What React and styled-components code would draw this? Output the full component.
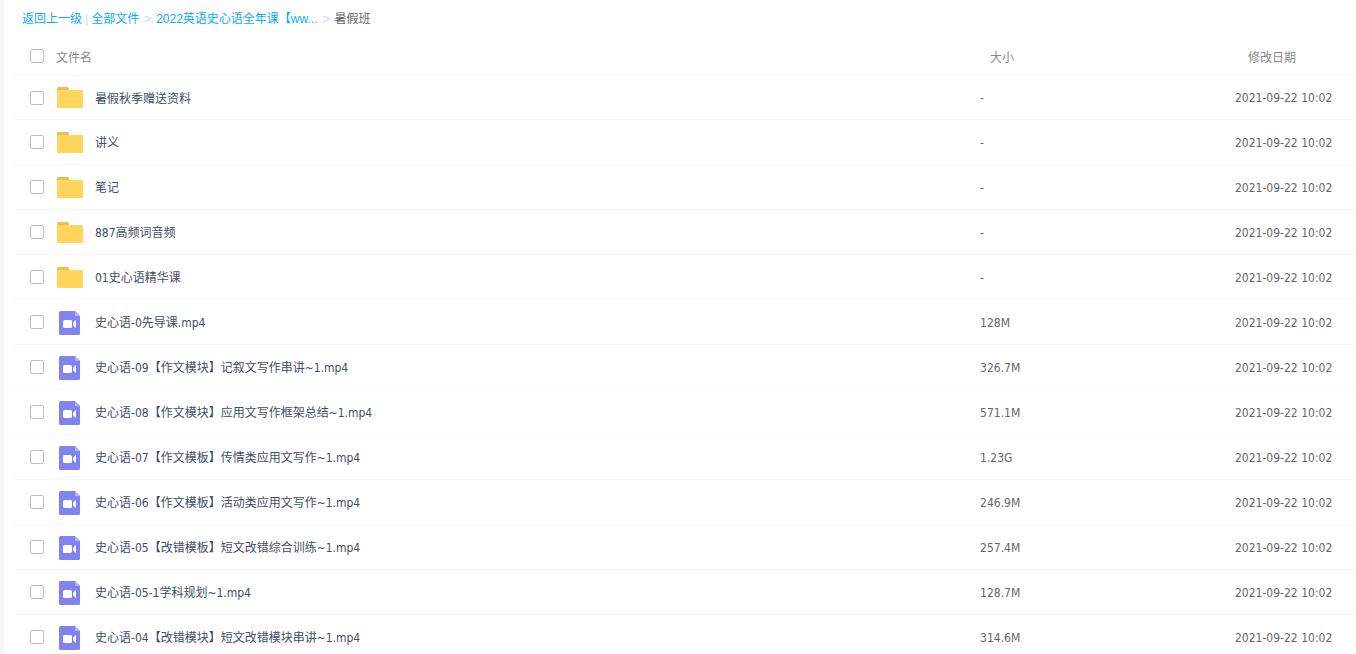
import React, { useState } from 'react';
import styled, { createGlobalStyle } from 'styled-components';

const GlobalStyle = createGlobalStyle`
  * {
    box-sizing: border-box;
  }

  body {
    margin: 0;
    background: #fff;
    color: #424e67;
    font-family: 'DejaVu Sans Condensed', 'Noto Sans', 'Noto Sans CJK SC', sans-serif;
    font-size: 12px;
  }
`;

const Page = styled.div`
  height: 100vh;
  overflow: hidden;
  border-left: 4px solid #f7f7f7;
`;

const Breadcrumb = styled.nav`
  display: flex;
  align-items: center;
  height: 37px;
  padding-left: 18px;
  font-family: 'Liberation Sans', 'Noto Sans CJK SC', sans-serif;
  line-height: 18px;
  white-space: nowrap;
`;

const Crumb = styled.a`
  color: #09aaff;
  text-decoration: none;

  &:hover {
    text-decoration: underline;
  }
`;

const CurrentCrumb = styled.span`
  color: #666;
`;

const Divider = styled.span`
  margin: 0 3px;
  color: #c4d8f4;
`;

const Arrow = styled.span`
  margin: 0 5px;
  color: #c4d8f4;
`;

const FileTable = styled.table`
  width: calc(100% - 10px);
  margin-left: 10px;
  table-layout: fixed;
  border-collapse: separate;
  border-spacing: 0;
`;

const NameCol = styled.col`
  width: auto;
`;

const SizeCol = styled.col`
  width: 19%;
`;

const DateCol = styled.col`
  width: 121px;
`;

const HeadCell = styled.th`
  height: 38px;
  padding: 0 0 0 ${(p) => p.$indent || 0}px;
  color: #888;
  font-weight: 400;
  text-align: left;
`;

const Cell = styled.td`
  height: 45px;
  padding: 0;
  border-bottom: 1px solid #f2f6fd;
  white-space: nowrap;

  tr:first-child > & {
    border-top: 1px solid #f2f6fd;
  }
`;

const InfoCell = styled(Cell)`
  padding-top: 1px;
  color: #666;
`;

const NameBox = styled.div`
  display: flex;
  align-items: center;
  padding-left: 16px;
`;

const Checkbox = styled.input`
  appearance: none;
  flex: none;
  width: 14px;
  height: 14px;
  margin: 0;
  border: 1px solid #b3c1d0;
  border-radius: 2px;
  background: #fff;
  cursor: pointer;

  &:checked {
    border-color: #09aaff;
    background: #09aaff;
  }
`;

const HeadLabel = styled.label`
  margin-left: 12px;
`;

const IconBox = styled.span`
  display: flex;
  justify-content: center;
  flex: none;
  width: 26px;
  margin: 0 12px 0 13px;
`;

const FileLink = styled.a`
  overflow: hidden;
  padding-top: 2px;
  color: #424e67;
  line-height: 20px;
  text-decoration: none;
  text-overflow: ellipsis;

  &:hover {
    color: #09aaff;
  }
`;

const FolderIcon = () => (
  <svg width="26" height="21" viewBox="0 0 26 21" aria-hidden="true">
    <path d="M0 5V1.5Q0 0 1.5 0H10.5Q12 0 12 1.5V5Z" fill="#eebf4c" />
    <path d="M0 3H24.5Q26 3 26 4.5V19.5Q26 21 24.5 21H1.5Q0 21 0 19.5Z" fill="#ffd55c" />
  </svg>
);

const VideoIcon = () => (
  <svg width="22" height="26" viewBox="0 -2 22 26" aria-hidden="true">
    <path d="M1.5 0H16L21 5V22.5Q21 24 19.5 24H1.5Q0 24 0 22.5V1.5Q0 0 1.5 0Z" fill="#8183f1" />
    <path d="M16 0L21 5H17Q16 5 16 4Z" fill="#b4b5f8" />
    <rect x="4" y="9" width="9" height="8" rx="1.5" fill="#fff" />
    <path d="M14 12L16 9.5Q17 9 17 10V16Q17 17 16 16.5L14 14Z" fill="#fff" />
  </svg>
);

const DATE = '2021-09-22 10:02';

const files = [
  { name: '暑假秋季赠送资料', folder: true },
  { name: '讲义', folder: true },
  { name: '笔记', folder: true },
  { name: '887高频词音频', folder: true },
  { name: '01史心语精华课', folder: true },
  { name: '史心语-0先导课.mp4', size: '128M' },
  { name: '史心语-09【作文模块】记叙文写作串讲~1.mp4', size: '326.7M' },
  { name: '史心语-08【作文模块】应用文写作框架总结~1.mp4', size: '571.1M' },
  { name: '史心语-07【作文模板】传情类应用文写作~1.mp4', size: '1.23G' },
  { name: '史心语-06【作文模板】活动类应用文写作~1.mp4', size: '246.9M' },
  { name: '史心语-05【改错模板】短文改错综合训练~1.mp4', size: '257.4M' },
  { name: '史心语-05-1学科规划~1.mp4', size: '128.7M' },
  { name: '史心语-04【改错模块】短文改错模块串讲~1.mp4', size: '314.6M' },
];

function App() {
  const [selected, setSelected] = useState([]);

  const toggle = (name) => {
    setSelected((prev) =>
      prev.includes(name) ? prev.filter((n) => n !== name) : [...prev, name]
    );
  };

  const allSelected = selected.length === files.length;
  const toggleAll = () => setSelected(allSelected ? [] : files.map((f) => f.name));

  return (
    <Page>
      <GlobalStyle />
      <Breadcrumb>
        <Crumb href="#back">返回上一级</Crumb>
        <Divider>|</Divider>
        <Crumb href="#all">全部文件</Crumb>
        <Arrow>&gt;</Arrow>
        <Crumb href="#course">2022英语史心语全年课【ww...</Crumb>
        <Arrow>&gt;</Arrow>
        <CurrentCrumb>暑假班</CurrentCrumb>
      </Breadcrumb>

      <FileTable>
        <colgroup>
          <NameCol />
          <SizeCol />
          <DateCol />
        </colgroup>
        <thead>
          <tr>
            <HeadCell>
              <NameBox>
                <Checkbox
                  type="checkbox"
                  id="select-all"
                  checked={allSelected}
                  onChange={toggleAll}
                />
                <HeadLabel htmlFor="select-all">文件名</HeadLabel>
              </NameBox>
            </HeadCell>
            <HeadCell $indent={10}>大小</HeadCell>
            <HeadCell $indent={13}>修改日期</HeadCell>
          </tr>
        </thead>
        <tbody>
          {files.map((file, index) => (
            <tr key={file.name}>
              <Cell>
                <NameBox>
                  <Checkbox
                    type="checkbox"
                    aria-labelledby={`file-${index}`}
                    checked={selected.includes(file.name)}
                    onChange={() => toggle(file.name)}
                  />
                  <IconBox>{file.folder ? <FolderIcon /> : <VideoIcon />}</IconBox>
                  <FileLink id={`file-${index}`} href={`#file-${index}`}>
                    {file.name}
                  </FileLink>
                </NameBox>
              </Cell>
              <InfoCell>{file.size || '-'}</InfoCell>
              <InfoCell>{DATE}</InfoCell>
            </tr>
          ))}
        </tbody>
      </FileTable>
    </Page>
  );
}

export default App;
